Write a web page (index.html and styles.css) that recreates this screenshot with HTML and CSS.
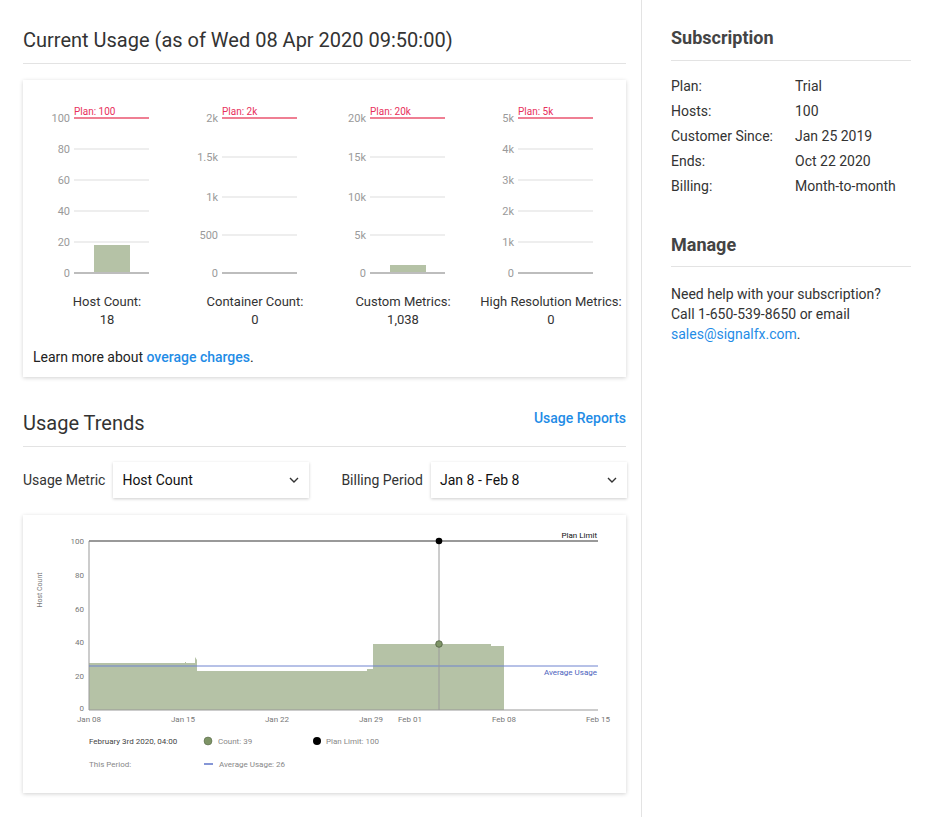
FILE: index.html
```html
<!DOCTYPE html>
<html>
<head>
<meta charset="utf-8">
<link rel="stylesheet" href="styles.css">
</head>
<body>
<div class="page">
  <main class="main">
    <h1 class="section-title">Current Usage (as of Wed 08 Apr 2020 09:50:00)</h1>
    <div class="card usage-card">
      <div class="bars">
        <div class="bar-col">
          <svg class="bar-svg" width="148" height="180" viewBox="0 0 148 180">
            <g class="grid"><line x1="41" x2="116" y1="49" y2="49"/><line x1="41" x2="116" y1="80" y2="80"/><line x1="41" x2="116" y1="111" y2="111"/><line x1="41" x2="116" y1="142" y2="142"/></g>
            <rect class="bar" x="61" y="145" width="36" height="28"/>
            <line class="zero" x1="41" x2="116" y1="173" y2="173"/>
            <line class="plan" x1="41" x2="116" y1="18" y2="18"/>
            <text class="plan-t" x="41" y="15">Plan: 100</text>
            <g class="ytick"><text x="37" y="22">100</text><text x="37" y="53">80</text><text x="37" y="84">60</text><text x="37" y="115">40</text><text x="37" y="146">20</text><text x="37" y="177">0</text></g>
          </svg>
          <div class="bar-label">Host Count:<br>18</div>
        </div>
        <div class="bar-col">
          <svg class="bar-svg" width="148" height="180" viewBox="0 0 148 180">
            <g class="grid"><line x1="41" x2="116" y1="57" y2="57"/><line x1="41" x2="116" y1="97" y2="97"/><line x1="41" x2="116" y1="135" y2="135"/></g>
            <line class="zero" x1="41" x2="116" y1="173" y2="173"/>
            <line class="plan" x1="41" x2="116" y1="18" y2="18"/>
            <text class="plan-t" x="41" y="15">Plan: 2k</text>
            <g class="ytick"><text x="37" y="22">2k</text><text x="37" y="61">1.5k</text><text x="37" y="101">1k</text><text x="37" y="139">500</text><text x="37" y="177">0</text></g>
          </svg>
          <div class="bar-label">Container Count:<br>0</div>
        </div>
        <div class="bar-col">
          <svg class="bar-svg" width="148" height="180" viewBox="0 0 148 180">
            <g class="grid"><line x1="41" x2="116" y1="57" y2="57"/><line x1="41" x2="116" y1="97" y2="97"/><line x1="41" x2="116" y1="135" y2="135"/></g>
            <rect class="bar" x="61" y="165" width="36" height="8"/>
            <line class="zero" x1="41" x2="116" y1="173" y2="173"/>
            <line class="plan" x1="41" x2="116" y1="18" y2="18"/>
            <text class="plan-t" x="41" y="15">Plan: 20k</text>
            <g class="ytick"><text x="37" y="22">20k</text><text x="37" y="61">15k</text><text x="37" y="101">10k</text><text x="37" y="139">5k</text><text x="37" y="177">0</text></g>
          </svg>
          <div class="bar-label">Custom Metrics:<br>1,038</div>
        </div>
        <div class="bar-col">
          <svg class="bar-svg" width="148" height="180" viewBox="0 0 148 180">
            <g class="grid"><line x1="41" x2="116" y1="49" y2="49"/><line x1="41" x2="116" y1="80" y2="80"/><line x1="41" x2="116" y1="111" y2="111"/><line x1="41" x2="116" y1="142" y2="142"/></g>
            <line class="zero" x1="41" x2="116" y1="173" y2="173"/>
            <line class="plan" x1="41" x2="116" y1="18" y2="18"/>
            <text class="plan-t" x="41" y="15">Plan: 5k</text>
            <g class="ytick"><text x="37" y="22">5k</text><text x="37" y="53">4k</text><text x="37" y="84">3k</text><text x="37" y="115">2k</text><text x="37" y="146">1k</text><text x="37" y="177">0</text></g>
          </svg>
          <div class="bar-label">High Resolution Metrics:<br>0</div>
        </div>
      </div>
      <p class="learn">Learn more about <a class="link" href="#">overage charges</a>.</p>
    </div>

    <div class="trends-head">
      <h1 class="trends-title">Usage Trends</h1>
      <a class="reports-link" href="#">Usage Reports</a>
    </div>

    <div class="filters">
      <div class="filter">
        <span class="filter-label">Usage Metric</span>
        <div class="select"><span>Host Count</span><svg class="chev" width="10" height="6" viewBox="0 0 10 6"><path d="M1 1l4 4 4-4"/></svg></div>
      </div>
      <div class="filter">
        <span class="filter-label">Billing Period</span>
        <div class="select"><span>Jan 8 - Feb 8</span><svg class="chev" width="10" height="6" viewBox="0 0 10 6"><path d="M1 1l4 4 4-4"/></svg></div>
      </div>
    </div>

    <div class="card trend-card">
      <svg class="trend-svg" width="603" height="278" viewBox="0 0 603 278">
        <text class="axis-title" transform="translate(19 75) rotate(-90)" text-anchor="middle">Host Count</text>
        <g class="yl">
          <text x="61" y="29">100</text><text x="61" y="63">80</text><text x="61" y="97">60</text><text x="61" y="130">40</text><text x="61" y="164">20</text><text x="61" y="196">0</text>
        </g>
        <polygon class="area" points="66,148 162,148 162,147 163,147 163,148 172,148 172,142 174,145 174,156 344,156 344,154 350,154 350,129 468,129 468,131 481,131 481,195 66,195"/>
        <line class="axis" x1="66" y1="26" x2="66" y2="195"/>
        <line class="axis" x1="66" y1="195" x2="575" y2="195"/>
        <line class="limit" x1="66" y1="26" x2="575" y2="26"/>
        <text class="limit-t" x="574" y="23" text-anchor="end">Plan Limit</text>
        <line class="avg" x1="66" y1="151" x2="575" y2="151"/>
        <text class="avg-t" x="574" y="160" text-anchor="end">Average Usage</text>
        <line class="hover" x1="416" y1="26" x2="416" y2="195"/>
        <circle class="dot-black" cx="416" cy="26" r="3.3"/>
        <circle class="dot-green" cx="416" cy="129" r="3.3"/>
        <g class="xl">
          <text x="66" y="207">Jan 08</text><text x="160" y="207">Jan 15</text><text x="254" y="207">Jan 22</text><text x="348" y="207">Jan 29</text><text x="387" y="207">Feb 01</text><text x="481" y="207">Feb 08</text><text x="575" y="207">Feb 15</text>
        </g>
        <text class="lg-date" x="66" y="229">February 3rd 2020, 04:00</text>
        <circle class="lg-green" cx="185" cy="226" r="4"/>
        <text class="lg" x="195" y="229">Count: 39</text>
        <circle cx="294" cy="226" r="4" fill="#000"/>
        <text class="lg" x="303" y="229">Plan Limit: 100</text>
        <text class="lg" x="66" y="252">This Period:</text>
        <line class="avg-dash" x1="181" y1="249" x2="190" y2="249"/>
        <text class="lg" x="196" y="252">Average Usage: 26</text>
      </svg>
    </div>
  </main>

  <aside class="side">
    <h2 class="side-title">Subscription</h2>
    <dl class="sub-list">
      <div class="sub-row"><dt>Plan:</dt><dd>Trial</dd></div>
      <div class="sub-row"><dt>Hosts:</dt><dd>100</dd></div>
      <div class="sub-row"><dt>Customer Since:</dt><dd>Jan 25 2019</dd></div>
      <div class="sub-row"><dt>Ends:</dt><dd>Oct 22 2020</dd></div>
      <div class="sub-row"><dt>Billing:</dt><dd>Month-to-month</dd></div>
    </dl>
    <h2 class="side-title manage">Manage</h2>
    <p class="manage-text">Need help with your subscription? Call 1-650-539-8650 or email <a class="link" href="#">sales@signalfx.com</a>.</p>
  </aside>
</div>
</body>
</html>
```

FILE: styles.css
```css
* { box-sizing: border-box; }
html, body { margin: 0; padding: 0; background: #fff; }
body {
  font-family: Roboto, "Noto Sans", "Liberation Sans", sans-serif;
  color: #333;
  font-size: 14px;
}
.page { display: flex; min-height: 817px; }
.main { width: 641px; padding: 28px 15px 0 23px; flex: none; }
.side { flex: 1; border-left: 1px solid #e3e3e3; padding: 27px 28px 0 29px; }

.section-title {
  margin: 0;
  font-size: 20px;
  font-weight: 400;
  line-height: 24px;
  padding-bottom: 11px;
  border-bottom: 1px solid #e3e3e3;
  color: #333;
}
.card {
  background: #fff;
  box-shadow: 0 1px 4px rgba(0,0,0,0.18);
}
.usage-card { margin-top: 16px; padding: 20px 10px 10px 10px; height: 297px; }
.bars { display: grid; grid-template-columns: repeat(4, 148px); }
.bar-col { display: flex; flex-direction: column; align-items: center; }
.bar-svg { display: block; }
.bar-svg .grid line { stroke: #eeeeee; stroke-width: 2; }
.bar-svg .zero { stroke: #bdbdbd; stroke-width: 2; }
.bar-svg .plan { stroke: #ef7f93; stroke-width: 2; }
.bar-svg .bar { fill: #b5c2a6; }
.plan-t { fill: #e8305c; font-size: 10px; font-family: Roboto, "Noto Sans", sans-serif; }
.ytick text { fill: #9a9a9a; font-size: 11px; text-anchor: end; font-family: Roboto, "Noto Sans", sans-serif; }
.bar-label {
  margin-top: 13px;
  font-size: 13px;
  line-height: 18px;
  text-align: center;
  color: #333;
  white-space: nowrap;
}
.learn { margin: 18px 0 0; line-height: 20px; font-size: 14px; color: #222; }
.link { color: #1f8ce6; text-decoration: none; }
.learn .link { font-weight: 500; }

.trends-head {
  margin-top: 31px;
  display: flex;
  justify-content: space-between;
  align-items: flex-start;
  border-bottom: 1px solid #e3e3e3;
  padding-bottom: 11px;
}
.trends-title { margin: 3px 0 0; font-size: 20px; font-weight: 400; line-height: 24px; }
.reports-link { color: #1f8ce6; text-decoration: none; font-weight: 500; font-size: 14px; line-height: 20px; }

.filters { margin-top: 15px; display: flex; gap: 32px; }
.filter { display: flex; align-items: center; gap: 8px; }
.filter-label { font-size: 14px; color: #333; white-space: nowrap; }
.select {
  width: 196px;
  height: 36px;
  display: flex;
  align-items: center;
  justify-content: space-between;
  padding: 0 10px 0 9px;
  box-shadow: 0 1px 3px rgba(0,0,0,0.2);
  font-size: 14px;
  font-weight: 400;
  color: #111;
}
.chev path { fill: none; stroke: #333; stroke-width: 1.4; }

.trend-card { margin-top: 17px; height: 278px; }
.trend-svg { display: block; font-family: Roboto, "Noto Sans", sans-serif; }
.axis-title { fill: #777; font-size: 7px; }
.yl text { fill: #777; font-size: 8px; text-anchor: end; }
.xl text { fill: #777; font-size: 8px; text-anchor: middle; }
.area { fill: #b5c2a6; }
.axis { stroke: #999; stroke-width: 1; }
.limit { stroke: #777; stroke-width: 1.5; }
.limit-t { fill: #111; font-size: 8px; }
.avg { stroke: #6f83cf; stroke-width: 1; }
.avg-t { fill: #4b62bd; font-size: 8px; }
.hover { stroke: #9a9a9a; stroke-width: 1; }
.dot-black { fill: #000; }
.dot-green { fill: #7e9466; stroke: #4f5e40; stroke-width: 0.8; }
.lg-date { fill: #444; font-size: 8px; }
.lg { fill: #888; font-size: 8px; }
.lg-green { fill: #7e9466; stroke: #4f5e40; stroke-width: 0.5; }
.avg-dash { stroke: #5d73c8; stroke-width: 1.5; }

.side-title {
  margin: 0;
  font-size: 18px;
  font-weight: 700;
  line-height: 22px;
  color: #444;
  padding-bottom: 11px;
  border-bottom: 1px solid #e3e3e3;
}
.sub-list { margin: 13px 0 0; }
.sub-row { display: flex; line-height: 25px; font-size: 14px; }
.sub-row dt { width: 124px; color: #333; }
.sub-row dd { margin: 0; color: #333; }
.manage { margin-top: 35px; padding-bottom: 10px; }
.manage-text { margin: 17px 0 0; max-width: 222px; line-height: 20px; font-size: 14px; color: #333; }
```
